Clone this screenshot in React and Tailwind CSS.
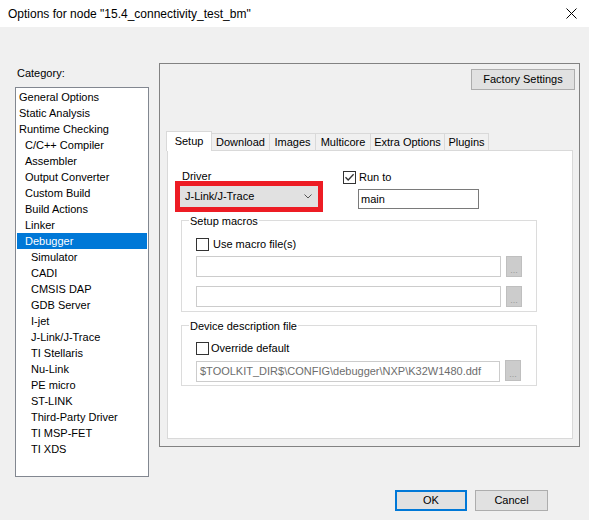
import React from 'react';

const items = [
  ['General Options', 0],
  ['Static Analysis', 0],
  ['Runtime Checking', 0],
  ['C/C++ Compiler', 1],
  ['Assembler', 1],
  ['Output Converter', 1],
  ['Custom Build', 1],
  ['Build Actions', 1],
  ['Linker', 1],
  ['Debugger', 1],
  ['Simulator', 2],
  ['CADI', 2],
  ['CMSIS DAP', 2],
  ['GDB Server', 2],
  ['I-jet', 2],
  ['J-Link/J-Trace', 2],
  ['TI Stellaris', 2],
  ['Nu-Link', 2],
  ['PE micro', 2],
  ['ST-LINK', 2],
  ['Third-Party Driver', 2],
  ['TI MSP-FET', 2],
  ['TI XDS', 2],
];

const tabs = [
  ['Download', 'w-[58px]'],
  ['Images', 'w-[46px]'],
  ['Multicore', 'w-[55px]'],
  ['Extra Options', 'w-[74px]'],
  ['Plugins', 'w-[44px]'],
];

function Check({ checked }) {
  return (
    <span className="w-[13px] h-[13px] border border-[#333333] bg-white flex items-center justify-center shrink-0">
      {checked && (
        <svg width="11" height="11" viewBox="0 0 11 11">
          <path d="M1.5 5.2 L4.2 8 L9.6 2.2" fill="none" stroke="#333333" strokeWidth="1.3" />
        </svg>
      )}
    </span>
  );
}

function Browse({ className = '' }) {
  return (
    <div className={`w-[16px] h-[21px] bg-[#cccccc] border border-[#bfbfbf] flex items-end justify-center text-[#9a9a9a] text-[9px] leading-[12px] ${className}`}>
      ...
    </div>
  );
}

export default function App() {
  return (
    <div className="w-[589px] h-[520px] bg-[#f0f0f0] flex flex-col font-['Liberation_Sans',Arial,sans-serif] text-[11px] text-black overflow-hidden">
      {/* title bar */}
      <div className="h-[27px] bg-white flex items-center justify-between pl-[8px] pr-[12px] shrink-0">
        <span className="text-[12px] leading-[14px]">Options for node "15.4_connectivity_test_bm"</span>
        <svg width="11" height="11" viewBox="0 0 11 11">
          <path d="M0.5 0.5 L10.5 10.5 M10.5 0.5 L0.5 10.5" stroke="#000" strokeWidth="1" />
        </svg>
      </div>

      <div className="flex items-start">
        {/* category column */}
        <div className="pl-[15px] w-[149px] shrink-0">
          <div className="mt-[40px] h-[13px] leading-[13px] pl-[2px]">Category:</div>
          <div className="mt-[7px] w-[134px] h-[390px] border border-[#828790] bg-white pt-[1px]">
            {items.map(([name, lvl]) => (
              <div
                key={name}
                className={`mx-[1px] h-[16px] leading-[16px] ${lvl === 0 ? 'pl-[2px]' : lvl === 1 ? 'pl-[8px]' : 'pl-[14px]'} ${name === 'Debugger' ? 'bg-[#0078d7] text-white' : ''}`}
              >
                {name}
              </div>
            ))}
          </div>
        </div>

        {/* options panel */}
        <div className="ml-[10px] mt-[36px] w-[421px] h-[384px] border border-[#828282] flex flex-col">
          <div className="self-end mt-[5px] mr-[4px] w-[104px] h-[21px] bg-[#e1e1e1] border border-[#adadad] flex items-center justify-center">
            Factory Settings
          </div>

          {/* tabs */}
          <div className="mt-[41px] ml-[6px] h-[19px] flex items-end">
            <div className="relative z-10 -mb-px w-[46px] h-[20px] bg-white border-l border-t border-r border-[#d9d9d9] flex items-center justify-center pb-[1px]">
              Setup
            </div>
            {tabs.map(([t, w]) => (
              <div key={t} className={`${w} h-[17px] bg-[#f0f0f0] border-t border-r border-[#d9d9d9] flex items-center justify-center pt-[1px]`}>
                {t}
              </div>
            ))}
          </div>

          {/* tab page */}
          <div className="ml-[7px] w-[406px] h-[289px] bg-white border border-[#d9d9d9] flex flex-col">
            <div className="flex">
              <div className="ml-[7px] w-[148px]">
                <div className="mt-[18px] h-[12px] leading-[14px] pl-[7px]">Driver</div>
                <div className="h-[31px] border-[5px] border-[#ed1c24] bg-[#e1e1e1] flex items-center justify-between pl-[5px] pr-[6px]">
                  <span>J-Link/J-Trace</span>
                  <svg width="8" height="5" viewBox="0 0 8 5">
                    <path d="M0.5 0.5 L4 4 L7.5 0.5" fill="none" stroke="#555555" strokeWidth="1" />
                  </svg>
                </div>
              </div>
              <div className="ml-[20px]">
                <div className="mt-[19px] flex items-center">
                  <Check checked />
                  <span className="ml-[3px] leading-[13px] pt-[1px]">Run to</span>
                </div>
                <div className="mt-[5px] ml-[15px] w-[121px] h-[20px] border border-[#7a7a7a] bg-white pl-[2px] flex items-center">
                  main
                </div>
              </div>
            </div>

            {/* setup macros */}
            <div className="relative ml-[13px] mt-[8px] w-[356px] h-[92px] border border-[#dcdcdc]">
              <span className="absolute left-[7px] -top-[6px] bg-white px-[1px] leading-[13px]">Setup macros</span>
              <div className="mt-[16px] ml-[14px] flex items-center">
                <Check />
                <span className="ml-[4px] leading-[13px] pt-[1px]">Use macro file(s)</span>
              </div>
              <div className="mt-[5px] ml-[14px] flex">
                <div className="w-[305px] h-[21px] border border-[#cccccc] bg-white" />
                <Browse className="ml-[5px]" />
              </div>
              <div className="mt-[9px] ml-[14px] flex">
                <div className="w-[305px] h-[21px] border border-[#cccccc] bg-white" />
                <Browse className="ml-[5px]" />
              </div>
            </div>

            {/* device description */}
            <div className="relative ml-[13px] mt-[13px] w-[356px] h-[61px] border border-[#dcdcdc]">
              <span className="absolute left-[7px] -top-[6px] bg-white px-[1px] leading-[13px]">Device description file</span>
              <div className="mt-[15px] ml-[14px] flex items-center">
                <Check />
                <span className="ml-[2px] leading-[13px] pt-[1px]">Override default</span>
              </div>
              <div className="mt-[6px] ml-[14px] flex items-start">
                <div className="w-[304px] h-[21px] border border-[#cccccc] bg-white pl-[3px] flex items-center text-[#6d6d6d] whitespace-nowrap overflow-hidden">
                  $TOOLKIT_DIR$\CONFIG\debugger\NXP\K32W1480.ddf
                </div>
                <Browse className="ml-[5px] -mt-px" />
              </div>
            </div>
          </div>
        </div>
      </div>

      {/* dialog buttons */}
      <div className="mt-[13px] flex justify-end pr-[41px] gap-[8px]">
        <div className="w-[72px] h-[21px] bg-[#e1e1e1] border-2 border-[#0078d7] flex items-center justify-center">OK</div>
        <div className="w-[73px] h-[21px] bg-[#e1e1e1] border border-[#adadad] flex items-center justify-center">Cancel</div>
      </div>
    </div>
  );
}
